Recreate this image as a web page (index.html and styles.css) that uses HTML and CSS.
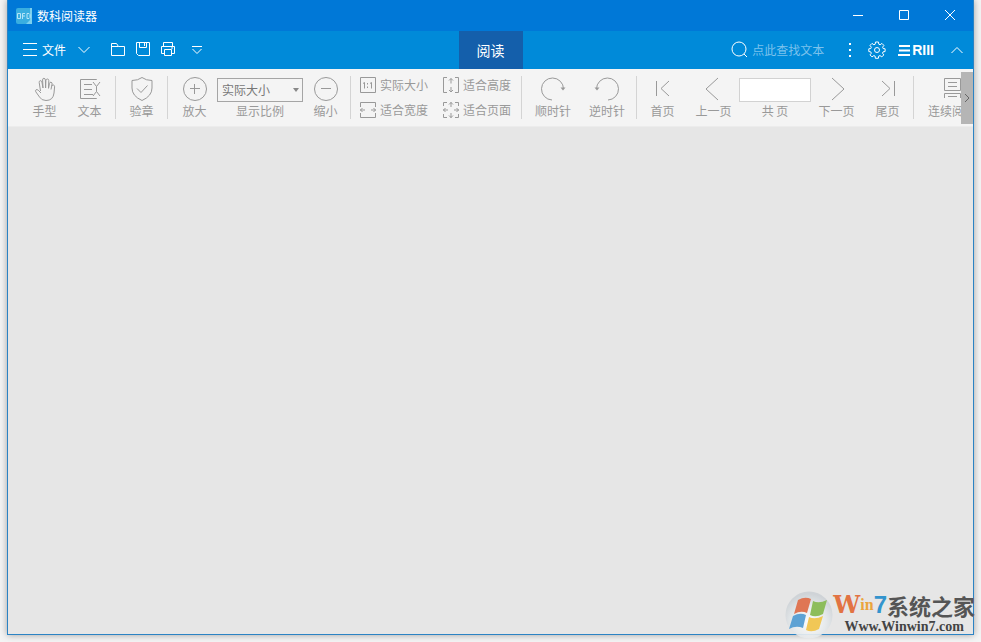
FILE: index.html
```html
<!DOCTYPE html>
<html lang="zh-CN">
<head>
<meta charset="utf-8">
<meta name="viewport" content="width=device-width, initial-scale=1">
<title>数科阅读器</title>
<link rel="stylesheet" href="styles.css">
</head>
<body>
<div class="window">
  <header class="titlebar">
    <svg class="app-icon" width="16" height="16" viewBox="0 0 16 16" aria-hidden="true">
      <rect width="16" height="16" rx="2" fill="#39aee0"/>
      <path d="M14 0h2v16h-6l4-4z" fill="#7bd0ee"/>
      <path d="M1.500 5.500h3v5h-3zM6.500 11V5.500H9M6.500 8H9M11 5.500h2l1 1v3l-1 1h-2z" fill="none" stroke="#b5e4f8"/>
    </svg>
    <h1 class="title">数科阅读器</h1>
    <div class="window-controls">
      <button class="control" aria-label="最小化"><svg width="12" height="12" viewBox="0 0 12 12"><path d="M1 5.500h10"/></svg></button>
      <button class="control" aria-label="最大化"><svg width="12" height="12" viewBox="0 0 12 12"><path d="M1.500 .5h9v9h-9z"/></svg></button>
      <button class="control" aria-label="关闭"><svg width="12" height="12" viewBox="0 0 12 12"><path d="M1 0l10 10M11 0L1 10"/></svg></button>
    </div>
  </header>

  <nav class="menubar">
    <div class="menu-left">
      <button class="file-button">
        <svg width="15" height="14" viewBox="0 0 15 14"><path d="M0 .5h14M0 6.500h14M0 12.500h14"/></svg>
        <span>文件</span>
        <svg class="file-arrow" width="12" height="8" viewBox="0 0 12 8"><path d="M.5 1L6 6.500 11.500 1"/></svg>
      </button>
      <div class="quick">
        <button class="quick-button" aria-label="打开"><svg width="16" height="16" viewBox="0 0 16 16"><path d="M1.500 13.500v-12h5l2 3h6v9zM1.500 4.500h7"/></svg></button>
        <button class="quick-button" aria-label="保存"><svg width="16" height="16" viewBox="0 0 16 16"><path d="M1.500 .5h13v13h-11l-2-2zM4.500 .5v5h7v-5M9.500 1v3"/></svg></button>
        <button class="quick-button" aria-label="打印"><svg width="16" height="16" viewBox="0 0 16 16"><path d="M3.500 4V.5h9V4M4 11.500H1.500v-7h13v7H12M4.500 7.500h7v6h-7zM11 6h2"/></svg></button>
        <button class="quick-button quick-more" aria-label="更多"><svg width="12" height="10" viewBox="0 0 12 10"><path d="M1 1.500h10M1.500 4L6 8.500 10.500 4"/></svg></button>
      </div>
    </div>
    <button class="tab">阅读</button>
    <div class="menu-right">
      <label class="search">
        <svg width="18" height="18" viewBox="0 0 18 18"><circle cx="8" cy="8" r="7"/><path d="M13 13l3 3"/></svg>
        <input type="text" placeholder="点此查找文本" aria-label="查找文本">
      </label>
      <button class="dots" aria-label="选项"><svg width="4" height="16" viewBox="0 0 4 16"><path d="M1 1h2v2H1zM1 7h2v2H1zM1 13h2v2H1z"/></svg></button>
      <button class="gear" aria-label="设置"><svg width="18" height="18" viewBox="0 0 18 18"><path d="M7.200 3.200L7.500 1h3l.3 2.200 1.300.6 1.800-1.400 2 2-1.300 1.800.5 1.300 2 .3v2.700l-2.100.4-.5 1.300 1.300 1.700-2 2-1.800-1.300-1.300.5-.3 2.200h-3l-.3-2.200-1.300-.5-1.800 1.300-2-2 1.300-1.700-.5-1.300-2-.4V7.800l2-.3.500-1.300L2 4.400l2-2 1.900 1.400z"/><circle cx="9" cy="9" r="2.500"/></svg></button>
      <a class="brand" href="#"><svg width="12" height="11" viewBox="0 0 12 11" aria-hidden="true"><path d="M1 0h11v2H1zM1 4.500h11v2H1zM0 9h12v2H0z"/></svg><span>RIII</span></a>
      <button class="collapse" aria-label="收起"><svg width="12" height="8" viewBox="0 0 12 8"><path d="M.5 7L6 1.500 11.500 7"/></svg></button>
    </div>
  </nav>

  <section class="ribbon">
    <div class="groups">
      <div class="group group-mode">
        <button class="tool narrow"><svg width="26" height="26" viewBox="0 0 26 26"><path d="M8.500 15L7.200 6.500Q7 5 8.200 4.700t1.700 1.200L11 12M11 12L10.600 4q0-1.700 1.300-1.700T13.400 4l.2 8M13.600 12l.3-7.500q.2-1.500 1.500-1.500t1.400 1.600L16.500 12M16.500 12.500l.9-5q.4-1.500 1.600-1.300 1.300.3 1.100 1.800L19 13.500M19.800 10q.4-1.300 1.600-1 1.300.3 1.200 1.800L22 17q-.8 7.500-8 7.500-4.500 0-6.500-3.500l-3.700-5.200q-.8-1.300.2-2 1.100-.6 2.200.4L9 17"/></svg><span>手型</span></button>
        <button class="tool narrow"><svg width="26" height="26" viewBox="0 0 26 26"><path d="M19.500 4V3.500h-16v19h16V22M7 8.500h8M7 13.500h8M7 18.500h9M23 6l-3.500 4.500v5L23 20M16 6l3.500 4.500M19.500 15.500L16 20"/></svg><span>文本</span></button>
      </div>
      <div class="group">
        <button class="tool wide"><svg width="26" height="26" viewBox="0 0 26 26"><path d="M13 1.500q4 3 10 3V12q0 8-10 12.500Q3 20 3 12V4.500q6 0 10-3zM8 12.500l4 4 6.500-7"/></svg><span>验章</span></button>
      </div>
      <div class="group pad">
        <button class="tool narrow"><svg width="26" height="26" viewBox="0 0 26 26"><circle cx="13" cy="13" r="11.500"/><path d="M8 12.500h10M12.500 8v10"/></svg><span>放大</span></button>
        <div class="field">
          <div class="select-wrap"><select id="scale"><option>实际大小</option></select><svg width="6" height="4" viewBox="0 0 6 4" aria-hidden="true"><path d="M0 0h6L3 4z"/></svg></div>
          <label for="scale">显示比例</label>
        </div>
        <button class="tool narrow"><svg width="26" height="26" viewBox="0 0 26 26"><circle cx="13" cy="13" r="11.500"/><path d="M8 12.500h10"/></svg><span>缩小</span></button>
      </div>
      <div class="group fit">
        <button class="fit-button"><svg width="16" height="17" viewBox="0 0 16 17"><path d="M.5 .5h15v15H.5zM3 6.500l1.500-1v6M10 6.500l1.500-1v6M7.500 6v1.500M7.500 9.500V11"/></svg><span>实际大小</span></button>
        <button class="fit-button"><svg width="16" height="17" viewBox="0 0 16 17"><path d="M4 .5H.5v15H4M12 .5h3.500v15H12M8 1.500v5M6 3.500l2-2 2 2M8 15v-5M6 13l2 2 2-2"/></svg><span>适合高度</span></button>
        <button class="fit-button"><svg width="16" height="17" viewBox="0 0 16 17"><path d="M.5 5V.5h15V5M.5 11v4.500h15V11M0 8h5M2.500 6l-2 2 2 2M16 8h-5M13.500 6l2 2-2 2"/></svg><span>适合宽度</span></button>
        <button class="fit-button"><svg width="16" height="17" viewBox="0 0 16 17"><path d="M.5 4V.5H4M12 .5h3.500V4M.5 12v3.500H4M12 15.500h3.500V12M8 0v5M6 2.500l2-2 2 2M8 16v-5M6 13.500l2 2 2-2M0 8h5M2.500 6l-2 2 2 2M16 8h-5M13.500 6l2 2-2 2"/></svg><span>适合页面</span></button>
      </div>
      <div class="group pad">
        <button class="tool rotate"><svg width="26" height="26" viewBox="0 0 26 26"><path d="M12 24A11 11 0 1 1 23.500 13"/><path class="solid" d="M20.500 11.500h5l-2.500 3z"/></svg><span>顺时针</span></button>
        <button class="tool rotate"><svg width="26" height="26" viewBox="0 0 26 26"><path d="M14 24A11 11 0 1 0 2.500 13"/><path class="solid" d="M.5 11.500h5l-2.500 3z"/></svg><span>逆时针</span></button>
      </div>
      <div class="group">
        <button class="tool wide"><svg width="26" height="26" viewBox="0 0 26 26"><path d="M6.500 5v15M19 5l-8 7.500 8 7.500"/></svg><span>首页</span></button>
        <button class="tool wide"><svg width="26" height="26" viewBox="0 0 26 26"><path d="M17 2L5 13l12 11"/></svg><span>上一页</span></button>
        <div class="field page-field">
          <input id="page" type="text">
          <label for="page">共 页</label>
        </div>
        <button class="tool wide"><svg width="26" height="26" viewBox="0 0 26 26"><path d="M8 2l12 11L8 24"/></svg><span>下一页</span></button>
        <button class="tool wide"><svg width="26" height="26" viewBox="0 0 26 26"><path d="M19.500 5v15M7 5l8 7.500L7 20"/></svg><span>尾页</span></button>
      </div>
      <div class="group">
        <button class="tool mode"><svg width="26" height="26" viewBox="0 0 26 26"><path d="M5.500 2.500h16v12h-16zM9 6.500h9M9 10.500h9M5.500 22v-4.500h16V22M9 20.500h9"/></svg><span>连续阅读</span></button>
      </div>
    </div>
    <button class="scroll" aria-label="向右滚动"><svg width="6" height="8" viewBox="0 0 6 8"><path d="M1 0l4 4-4 4"/></svg></button>
  </section>

  <main class="document"></main>
</div>

<aside class="watermark">
  <svg width="48" height="48" viewBox="0 0 48 48" aria-hidden="true">
    <defs>
      <radialGradient id="orb" cx=".5" cy=".65" r=".6"><stop offset="0" stop-color="#fff"/><stop offset=".6" stop-color="#e6eaec"/><stop offset="1" stop-color="#cdd2d6"/></radialGradient>
    </defs>
    <circle cx="24" cy="24" r="23.500" fill="url(#orb)"/>
    <path d="M13 9q7-4 13-1l-4 14q-6-3-13 1z" fill="#df6a45"/>
    <path d="M28 10q6 3 14-1l-4 14q-7 4-13 1z" fill="#84b94d"/>
    <path d="M8 25q7-4 13-1l-3 13q-7-3-14 1z" fill="#4f9bd3"/>
    <path d="M24 26q6 3 14-1l-4 13q-7 4-13 1z" fill="#f3c447"/>
  </svg>
  <div class="watermark-text">
    <div class="site-name"><span class="orange">W</span><span class="gold">in</span><span class="blue">7</span><span class="cn">系统之家</span></div>
    <div class="site-url">Www.Winwin7.com</div>
  </div>
</aside>
</body>
</html>
```

FILE: styles.css
```css
* { box-sizing: border-box; }

body {
  margin: 0;
  min-height: 100vh;
  display: flex;
  padding: 0 7px 7px;
  overflow: hidden;
  background: #f4f4f4;
  color: #999;
  font: 12px/16px "Noto Sans CJK SC", "Liberation Sans", sans-serif;
}

button, input, select {
  margin: 0;
  padding: 0;
  border: 0;
  border-radius: 0;
  background: none;
  color: inherit;
  font: inherit;
}

svg { display: block; flex: none; fill: none; stroke: currentColor; }

.window {
  flex: 1;
  min-width: 0;
  display: flex;
  flex-direction: column;
  border: 1px solid #2b83c4;
  border-top: 0;
  background: #e6e6e6;
  box-shadow: 0 0 7px rgba(0, 0, 0, .35);
}

.titlebar {
  display: flex;
  align-items: center;
  height: 31px;
  padding-left: 8px;
  background: #0078d7;
  color: #fff;
}
.app-icon { stroke: none; }
.title { margin: 0 0 0 5px; font-size: 12px; font-weight: 400; }
.window-controls { display: flex; align-self: stretch; margin-left: auto; }
.control { display: grid; place-items: center; width: 46px; }

.menubar {
  display: grid;
  grid-template-columns: 1fr 64px 1fr;
  height: 38px;
  background: #008ad9;
  color: #fff;
}
.menu-left, .menu-right, .file-button, .quick, .search, .brand { display: flex; align-items: center; }
.menu-left { padding-left: 15px; }
.file-button { gap: 4px; }
.file-arrow { margin-left: 8px; }
.quick { gap: 9px; margin-left: 20px; }
.quick-more { margin-left: 6px; }
.tab { background: #145fab; font-size: 14px; }
.menu-right { justify-content: flex-end; padding-right: 10px; }
.search { gap: 3px; }
.search input { width: 92px; outline: 0; }
.search input::placeholder { color: #7cc2ec; opacity: 1; }
.dots { margin-left: 4px; }
.dots svg, .brand svg { fill: currentColor; stroke: none; }
.gear { margin-left: 16px; }
.brand {
  gap: 2px;
  margin-left: 12px;
  color: #fff;
  font: bold 14px/16px "Liberation Sans", sans-serif;
  text-decoration: none;
}
.collapse { margin-left: 17px; }

.ribbon { display: flex; height: 58px; border-bottom: 1px solid #ececec; background: #f4f4f4; }
.groups { flex: 1; min-width: 0; display: flex; overflow: hidden; }
.group {
  display: flex;
  flex: none;
  height: 43px;
  margin-top: 7px;
  border-right: 1px solid #d4d4d4;
}
.group:last-child { border-right: 0; }
.group-mode { padding: 0 3px 0 14px; }
.pad { padding: 0 2px 0 4px; }
.tool, .field {
  display: flex;
  flex-direction: column;
  align-items: center;
  gap: 1px;
  white-space: nowrap;
}
.narrow { width: 45px; }
.wide { width: 51px; }
.rotate { width: 54px; }
.mode { width: 76px; }

.select-wrap { display: grid; align-items: center; margin-top: 2px; }
.select-wrap > * { grid-area: 1 / 1; }
.select-wrap select {
  width: 86px;
  height: 24px;
  padding-left: 4px;
  border: 1px solid #a5a5a5;
  color: #777;
  appearance: none;
}
.select-wrap svg { justify-self: end; margin-right: 4px; fill: #888; stroke: none; pointer-events: none; }
.page-field input {
  width: 72px;
  height: 24px;
  margin-top: 2px;
  border: 1px solid #d2d2d2;
  background: #fff;
}

.fit {
  display: grid;
  grid-template-columns: auto auto;
  align-content: start;
  gap: 7px 15px;
  padding: 0 10px 0 9px;
}
.fit-button { display: flex; align-items: center; gap: 4px; height: 18px; }
.solid { fill: currentColor; stroke: none; }

.scroll {
  display: grid;
  place-items: center;
  width: 12px;
  height: 52px;
  margin-top: 3px;
  background: #b5b5b5;
  color: #666;
}

.document { flex: 1; }

.watermark {
  position: absolute;
  right: 6px;
  bottom: 3px;
  display: flex;
  align-items: center;
}
.watermark svg { stroke: none; opacity: .9; }
.watermark-text { text-align: center; }
.site-name {
  display: flex;
  align-items: center;
  height: 24px;
  font: bold 16px/24px "Liberation Serif", serif;
}
.orange { color: #e27343; font-family: "DejaVu Serif", serif; font-size: 24px; }
.gold { color: #eba43b; }
.blue { color: #3394cd; font-family: "Liberation Sans", sans-serif; font-size: 24px; }
.cn { color: #555; font-family: "Noto Sans CJK SC", sans-serif; font-size: 22px; }
.site-url { color: #444; font: bold 14px/20px "Liberation Serif", serif; }
```
